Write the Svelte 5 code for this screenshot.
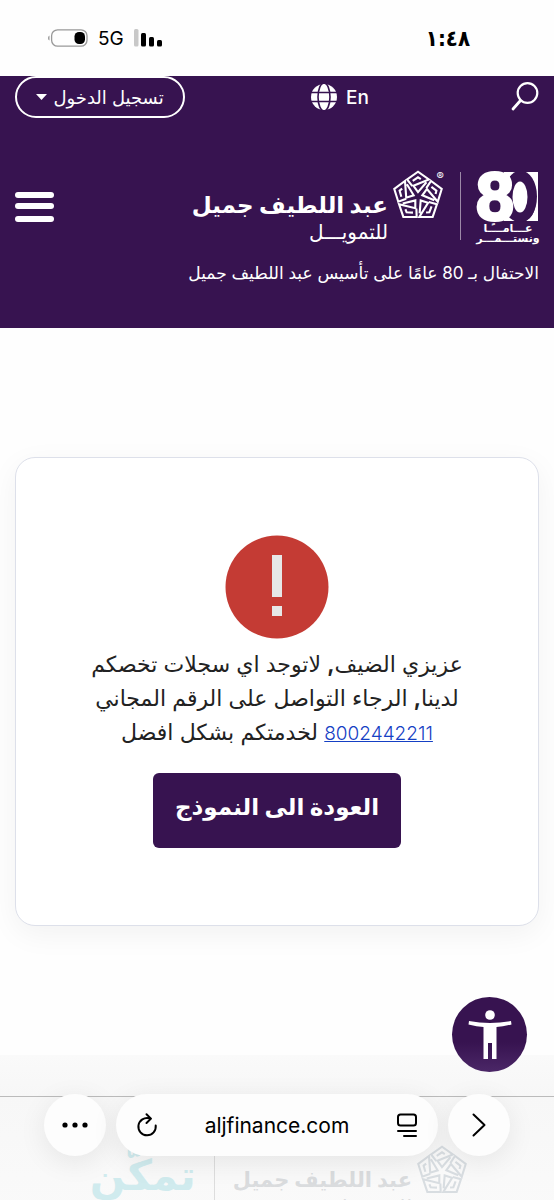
<script>
  const phone = '8002442211';
  const turns = [0, 72, 144, 216, 288];

  let menuOpen = $state(false);
</script>

{#snippet emblem()}
  <svg class="emblem" viewBox="-74 -76 148 148" aria-hidden="true">
    {#each turns as turn}
      <g transform="rotate({turn})">
        <path d="M-16 -30L-31 -49L0 -71L31 -49L-13 -31L0 -13L24 -41" />
        <path d="M-15 -45L0 -55L8 -50" />
      </g>
    {/each}
  </svg>
{/snippet}

<div class="page" dir="rtl" lang="ar">
  <div class="status" dir="ltr">
    <div class="status-left">
      <svg width="40" height="18" viewBox="0 0 40 18" aria-hidden="true">
        <path d="M1.5 6.5Q0 7 0 9t1.5 2.5z" fill="#999" />
        <rect x="3.6" y=".8" width="35.4" height="16.4" rx="6" fill="none" stroke="#999" stroke-width="1.3" />
        <rect x="26.5" y="3" width="10.5" height="12" rx="4.5" fill="#000" />
      </svg>
      <span class="network">5G</span>
      <svg width="28" height="18" viewBox="0 0 28 18" aria-hidden="true">
        <rect width="4.5" height="17.5" rx="1.5" fill="#c8c8c8" />
        <rect x="7" y="4" width="5" height="13.5" rx="1.5" />
        <rect x="15" y="8" width="5" height="9.5" rx="1.5" />
        <rect x="23" y="11" width="5" height="6.5" rx="1.5" />
      </svg>
    </div>
    <bdo class="time" dir="ltr">١:٤٨</bdo>
  </div>

  <header class="header">
    <div class="topbar">
      <button class="icon-btn search" aria-label="بحث">
        <svg width="28" height="29" viewBox="0 0 28 29" fill="none" stroke="#fff" aria-hidden="true">
          <circle cx="16.5" cy="10" r="9.8" stroke-width="2.2" />
          <path d="M9.5 17.5L2 26" stroke-width="2.8" stroke-linecap="round" />
        </svg>
      </button>
      <a class="language" href="#en" dir="ltr" lang="en">
        <svg width="26" height="26" viewBox="0 0 26 26" aria-hidden="true">
          <circle cx="13" cy="13" r="13" fill="#fff" />
          <g fill="none" stroke="#371350" stroke-width="1.6">
            <ellipse cx="13" cy="13" rx="6" ry="14" />
            <path d="M0 8.5h26M0 17.5h26" />
          </g>
        </svg>
        <span>En</span>
      </a>
      <button class="login">
        <span>تسجيل الدخول</span>
        <svg width="11" height="6" viewBox="0 0 11 6" aria-hidden="true"><path d="M0 0h11L5.5 6z" fill="#fff" /></svg>
      </button>
    </div>

    <div class="brand-row">
      <a class="brand" href="#home">
        <svg class="eighty" width="63" height="74" viewBox="0 0 63 74" direction="ltr">
          <rect x="28" y="2" width="34" height="49" fill="#fff" />
          <ellipse cx="44.5" cy="26.5" rx="16.5" ry="26" fill="#371350" />
          <text class="digit" x="25" y="51">0</text>
          <ellipse cx="44" cy="27" rx="7.5" ry="15.5" fill="#fff" />
          <text class="digit eight" x="0" y="50">8</text>
          <text class="years" x="32" y="62">عـــامـــًـا</text>
          <text class="years" x="32" y="72">ونستـــمـــر</text>
        </svg>
        <span class="divider"></span>
        <span class="mark">{@render emblem()}<span class="reg">®</span></span>
        <span class="wordmark">
          <strong>عبد اللطيف جميل</strong>
          <span>للتمويـــل</span>
        </span>
      </a>
      <button class="icon-btn menu" aria-label="القائمة" aria-expanded={menuOpen} onclick={() => (menuOpen = !menuOpen)}>
        <svg width="40" height="32" viewBox="0 0 40 32" fill="#fff" aria-hidden="true">
          <rect y="1" width="39" height="6" rx="3" />
          <rect y="12" width="39" height="6" rx="3" />
          <rect y="25" width="39" height="6" rx="3" />
        </svg>
      </button>
    </div>
    <p class="tagline">الاحتفال بـ 80 عامًا على تأسيس عبد اللطيف جميل</p>
  </header>

  <main class="content">
    <section class="card">
      <svg class="alert" width="104" height="104" viewBox="0 0 104 104" aria-hidden="true">
        <circle cx="52" cy="52" r="51.5" fill="#c43b34" />
        <path d="M47 20h10v42H47zM47 71h10v10H47z" fill="#e7e7e7" />
      </svg>
      <p class="message">
        عزيزي الضيف<b>,</b> لاتوجد اي سجلات تخصكم لدينا<b>,</b> الرجاء التواصل على الرقم المجاني
        <a href="tel:{phone}">{phone}</a> لخدمتكم بشكل افضل
      </p>
      <button class="back">العودة الى النموذج</button>
    </section>
  </main>

  <footer class="footer">
    <div class="footer-logos">
      <span class="mark">{@render emblem()}</span>
      <span class="wordmark">
        <strong>عبد اللطيف جميل</strong>
        <span>للتمويـــل</span>
      </span>
      <span class="divider"></span>
      <span class="tamkeen">تمكّن</span>
    </div>
  </footer>

  <button class="accessibility" aria-label="إمكانية الوصول">
    <svg width="44" height="50" viewBox="0 0 44 50" fill="#fff" aria-hidden="true">
      <circle cx="22" cy="5" r="4.8" />
      <path d="M1 11Q22 15 43 11L43.5 14.5Q35 16.5 28.5 17V49H24V33H20V49H15.5V17Q9 16.5 .5 14.5z" />
    </svg>
  </button>

  <nav class="browser-bar" dir="ltr">
    <button class="round" aria-label="المزيد">
      <svg width="26" height="6" viewBox="0 0 26 6" aria-hidden="true">
        <circle cx="3" cy="3" r="2.6" /><circle cx="13" cy="3" r="2.6" /><circle cx="23" cy="3" r="2.6" />
      </svg>
    </button>
    <div class="address">
      <button class="icon-btn" aria-label="إعادة تحميل">
        <svg width="20" height="24" viewBox="0 0 20 24" fill="none" stroke="#000" stroke-width="2" stroke-linecap="round" stroke-linejoin="round" aria-hidden="true">
          <path d="M12.5 5.3A8.7 8.7 0 1 0 18.7 12.5M9.5 1.3L14 5.6L9.5 10" />
        </svg>
      </button>
      <span>aljfinance.com</span>
      <button class="icon-btn" aria-label="عرض القارئ">
        <svg width="20" height="24" viewBox="0 0 20 24" fill="none" stroke="#000" stroke-width="2" stroke-linecap="round" aria-hidden="true">
          <rect x="1" y="1.5" width="18" height="11" rx="2.5" />
          <path d="M1 18H19M7 23H19" />
        </svg>
      </button>
    </div>
    <button class="round" aria-label="التالي">
      <svg width="14" height="24" viewBox="0 0 14 24" fill="none" stroke="#000" stroke-width="2" stroke-linecap="round" stroke-linejoin="round" aria-hidden="true">
        <path d="M1.5 1.5L12.5 12L1.5 22.5" />
      </svg>
    </button>
  </nav>
</div>

<style>
  :global(body) {
    background: #fefefe;
  }

  .page {
    --purple: #371350;
    position: relative;
    display: flex;
    flex-direction: column;
    height: 100vh;
    overflow: hidden;
    font-family: Inter, 'DejaVu Sans', sans-serif;
    color: #222;
  }

  button {
    padding: 0;
    border: none;
    background: none;
    font: inherit;
    color: inherit;
    cursor: pointer;
  }

  a {
    color: inherit;
    text-decoration: none;
  }

  svg {
    display: block;
    flex: none;
    overflow: visible;
  }

  /* Phone status bar */
  .status {
    display: flex;
    justify-content: space-between;
    align-items: center;
    flex: none;
    height: 76px;
    padding: 0 84px 0 48px;
    box-sizing: border-box;
    color: #000;
  }

  .status-left {
    display: flex;
    align-items: center;
    gap: 10px;
  }

  .network {
    font-size: 19px;
  }

  .time {
    font-family: 'DejaVu Sans Condensed', 'DejaVu Sans', sans-serif;
    font-size: 22px;
    font-weight: 700;
  }

  /* Header */
  .header {
    flex: none;
    background: var(--purple);
    color: #fff;
    padding: 0 15px 42px;
  }

  .topbar {
    display: flex;
    justify-content: space-between;
    align-items: center;
  }

  .search {
    width: 44px;
  }

  .language {
    display: flex;
    align-items: center;
    gap: 9px;
    font-size: 19px;
    font-weight: 500;
  }

  .login {
    display: flex;
    align-items: center;
    justify-content: center;
    gap: 6px;
    width: 170px;
    height: 42px;
    border: 2px solid #fff;
    border-radius: 21px;
    font-size: 18px;
  }

  .brand-row {
    display: flex;
    justify-content: space-between;
    align-items: center;
    margin-top: 52px;
  }

  .brand {
    display: flex;
    align-items: flex-start;
  }

  .digit {
    font-family: 'Liberation Sans', sans-serif;
    font-size: 68px;
    font-weight: 700;
    fill: var(--purple);
  }

  .eight {
    fill: #fff;
    stroke: #fff;
    stroke-width: 3px;
  }

  .years {
    font-size: 11px;
    font-weight: 700;
    fill: #fff;
    text-anchor: middle;
  }

  .brand .divider {
    width: 1px;
    height: 68px;
    margin: 2px 15px 0 16px;
    background: #9c89a7;
  }

  .mark {
    position: relative;
  }

  .emblem {
    width: 52px;
    height: 52px;
    fill: none;
    stroke: #fff;
    stroke-width: 6;
  }

  .reg {
    position: absolute;
    top: 0;
    right: 0;
    font-size: 11px;
    line-height: 12px;
  }

  .wordmark {
    display: flex;
    flex-direction: column;
    margin: 20px 4px 0 0;
    font-size: 20px;
    line-height: 24px;
    white-space: nowrap;
  }

  .wordmark strong {
    font-size: 23px;
    line-height: 30px;
  }

  .tagline {
    margin: 16px 0 0;
    font-size: 17px;
    line-height: 26px;
    white-space: nowrap;
  }

  /* Error card */
  .content {
    flex: none;
    padding: 129px 15px;
  }

  .card {
    display: flex;
    flex-direction: column;
    align-items: center;
    padding: 77px 64px;
    border: 1px solid #dde0ea;
    border-radius: 20px;
    background: #fff;
    box-shadow: 0 8px 30px rgba(0, 0, 0, 0.05);
  }

  .message {
    margin: 8px 0 22px;
    max-width: 386px;
    font-size: 22px;
    line-height: 34px;
    text-align: center;
  }

  .message a {
    color: #1540c4;
    font-size: 19px;
    font-weight: 300;
    text-decoration: underline;
  }

  .back {
    padding: 0 22px 8px;
    height: 75px;
    border-radius: 6px;
    background: var(--purple);
    color: #fff;
    font-size: 23px;
    font-weight: 700;
  }

  /* Footer */
  .footer {
    flex: 1 0 auto;
    padding-top: 41px;
    background: linear-gradient(#fafafa, #f7f7f7 41px, #fafafa);
  }

  .footer-logos {
    display: flex;
    align-items: flex-start;
    padding: 48px 86px 0;
    border-top: 1px solid #bbb;
    color: #dadcde;
  }

  .footer .emblem {
    stroke: #d8dde1;
  }

  .footer .wordmark strong {
    font-size: 21px;
  }

  .footer .divider {
    width: 1px;
    height: 60px;
    margin: 0 18px;
    background: #ddd;
  }

  .tamkeen {
    font-size: 42px;
    font-weight: 700;
    line-height: 60px;
    color: #d0ebee;
  }

  /* Floating controls */
  .accessibility {
    position: absolute;
    right: 27px;
    bottom: 128px;
    display: grid;
    place-items: center;
    width: 75px;
    height: 75px;
    border-radius: 50%;
    background: linear-gradient(#371350 60%, #4b2767);
  }

  .browser-bar {
    position: absolute;
    left: 44px;
    right: 44px;
    bottom: 44px;
    display: flex;
    gap: 10px;
    color: #000;
  }

  .round,
  .address {
    height: 62px;
    border-radius: 31px;
    background: #fdfdfd;
    box-shadow: 0 6px 28px rgba(0, 0, 0, 0.08);
  }

  .round {
    display: grid;
    place-items: center;
    flex: none;
    width: 62px;
  }

  .address {
    display: flex;
    flex: 1;
    align-items: center;
    justify-content: space-between;
    padding: 0 21px;
    font-size: 21px;
  }
</style>
